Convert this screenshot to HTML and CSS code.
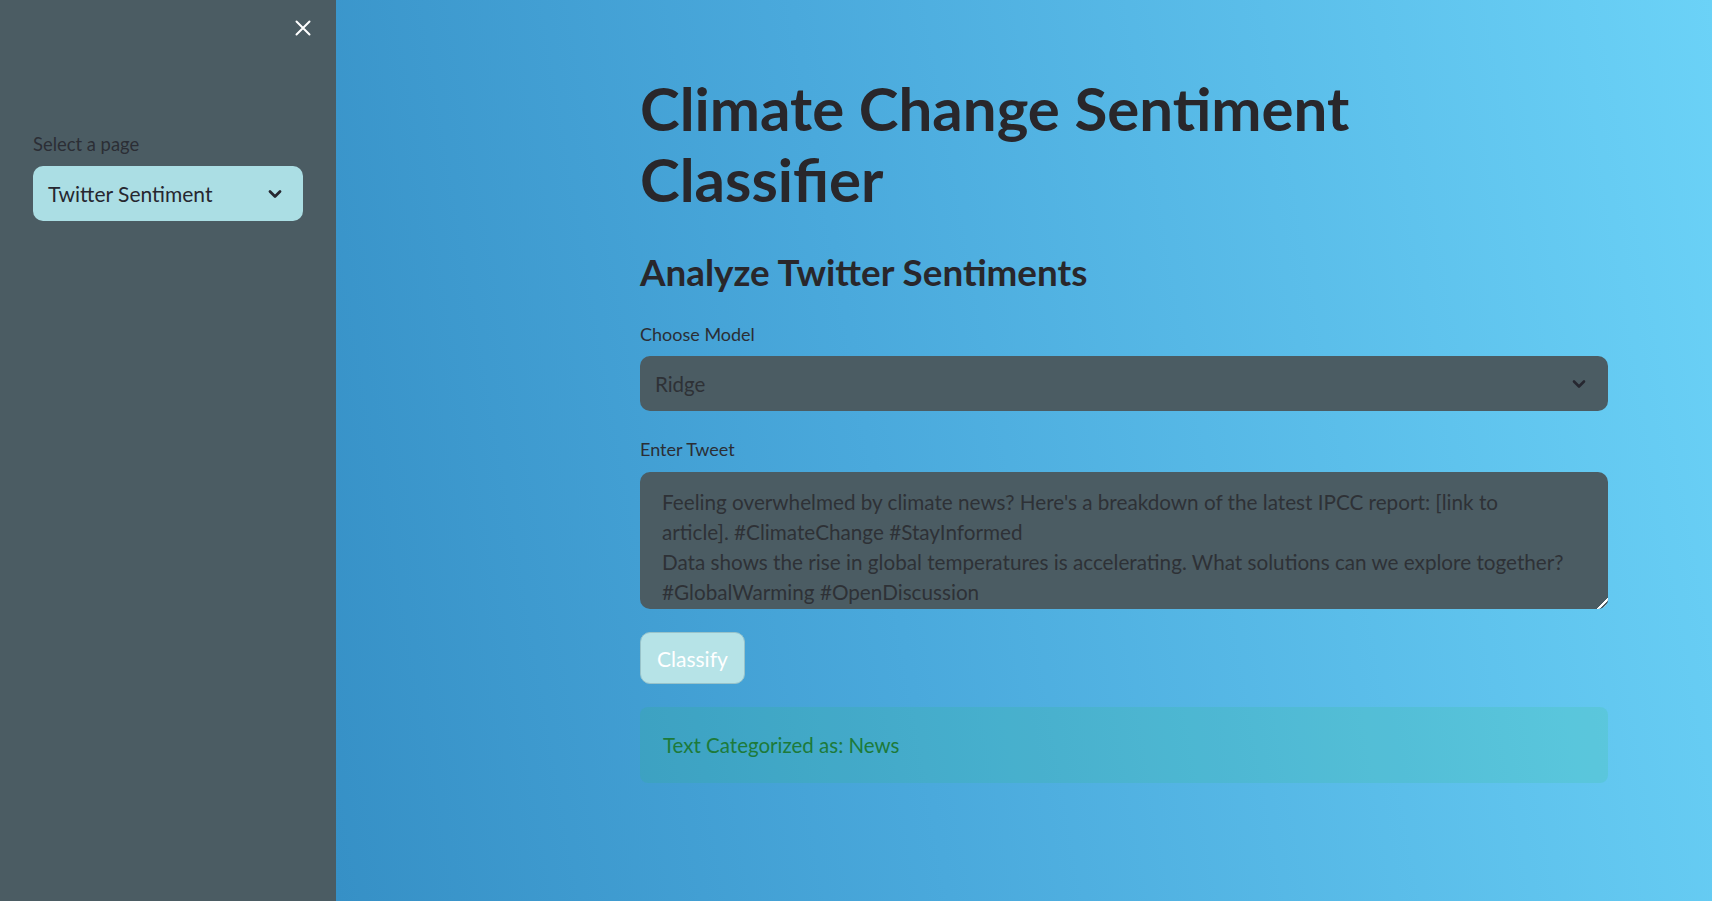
FILE: index.html
```html
<!DOCTYPE html>
<html lang="en">
<head>
<meta charset="utf-8">
<title>Climate Change Sentiment Classifier</title>
<link rel="stylesheet" href="styles.css">
</head>
<body>
<div class="app">
  <aside class="sidebar">
    <div class="sidebar-head">
      <button class="close" aria-label="Close sidebar">
        <svg width="16" height="16" viewBox="0 0 16 16"><path d="M1.5 1.5 L14.5 14.5 M14.5 1.5 L1.5 14.5" stroke="#ffffff" stroke-width="2" stroke-linecap="round" fill="none"/></svg>
      </button>
    </div>
    <div class="widget side-widget">
      <label class="label">Select a page</label>
      <div class="select select-light">
        <span class="select-value">Twitter Sentiment</span>
        <svg class="chev" width="14" height="10" viewBox="0 0 14 10"><path d="M2 2.5 L7 7.5 L12 2.5" stroke="#262730" stroke-width="2.8" fill="none" stroke-linecap="round" stroke-linejoin="round"/></svg>
      </div>
    </div>
  </aside>
  <main class="main">
    <div class="block">
      <h1 class="title">Climate Change Sentiment<br>Classifier</h1>
      <h2 class="subtitle">Analyze Twitter Sentiments</h2>
      <div class="widget">
        <label class="label">Choose Model</label>
        <div class="select select-dark">
          <span class="select-value">Ridge</span>
          <svg class="chev" width="14" height="10" viewBox="0 0 14 10"><path d="M2 2.5 L7 7.5 L12 2.5" stroke="#262730" stroke-width="2.6" fill="none" stroke-linecap="round" stroke-linejoin="round"/></svg>
        </div>
      </div>
      <div class="widget">
        <label class="label">Enter Tweet</label>
        <textarea class="textarea">Feeling overwhelmed by climate news? Here's a breakdown of the latest IPCC report: [link to
article]. #ClimateChange #StayInformed
Data shows the rise in global temperatures is accelerating. What solutions can we explore together?
#GlobalWarming #OpenDiscussion</textarea>
      </div>
      <button class="btn">Classify</button>
      <div class="alert">Text Categorized as: News</div>
    </div>
  </main>
</div>
</body>
</html>
```

FILE: styles.css
```css
* { box-sizing: border-box; }

html, body {
  margin: 0;
  height: 100%;
}

body {
  font-family: "Lato", "Source Sans Pro", sans-serif;
  color: #2a2a30;
  overflow: hidden;
}

.app {
  display: flex;
  height: 100vh;
}

.sidebar {
  width: 336px;
  flex: 0 0 336px;
  background: #4b5c63;
  padding: 0 33px;
}

.sidebar-head {
  display: flex;
  justify-content: flex-end;
  padding-top: 20px;
  height: 37px;
}

.close {
  background: none;
  border: none;
  padding: 0;
  margin-right: -8px;
  width: 16px;
  height: 16px;
  cursor: pointer;
  display: block;
}

.close svg { display: block; }

.side-widget {
  margin-top: 94px;
}

.label {
  display: block;
  font-size: 18px;
  line-height: 26px;
  color: #2b2e35;
  margin-bottom: 9px;
}

.sidebar .label { font-size: 18.4px; }

.select {
  height: 55px;
  border-radius: 10px;
  display: flex;
  align-items: center;
  justify-content: space-between;
  padding: 0 21px 0 15px;
  font-size: 20px;
  line-height: 24px;
}

.select-light {
  background: #abdee4;
  color: #262730;
  font-size: 21px;
}

.select-dark {
  background: #4b5c63;
  color: #2e3136;
  padding: 0 22px 0 15px;
  font-size: 20.5px;
}

.chev { display: block; }

.main {
  flex: 1;
  background: linear-gradient(80deg, #3690c6 0%, #4aa9dc 40%, #6bd2f7 100%);
  padding: 73px 104px 0 304px;
}

.block {
  width: 968px;
}

.title {
  margin: 0;
  font-size: 60px;
  line-height: 71px;
  font-weight: 700;
  color: #29272b;
}

.subtitle {
  margin: 31px 0 0;
  font-size: 36.8px;
  line-height: 52px;
  font-weight: 700;
  color: #29272b;
}

.main .widget {
  margin-top: 23px;
}

.main .widget + .widget {
  margin-top: 25px;
}

.textarea {
  display: block;
  width: 100%;
  height: 137px;
  border: none;
  border-radius: 10px;
  background: #4b5c63;
  color: #2e3136;
  font-family: inherit;
  font-size: 20.7px;
  line-height: 30px;
  padding: 15px 22px 2px;
  resize: vertical;
  overflow: hidden;
  white-space: pre-wrap;
  outline: none;
  margin-top: 10px;
}

.textarea::-webkit-resizer {
  background: linear-gradient(135deg, transparent 62%, #ffffff 62%, #ffffff 72%, #4b5c63 72%, #4b5c63 78%, #ffffff 78%);
  border-bottom-right-radius: 10px;
}

.main .label { margin-bottom: 9px; }

.btn {
  display: block;
  margin-top: 23px;
  height: 52px;
  padding: 0 16px;
  background: #b6e3e7;
  border: 1px solid #98c3ca;
  border-radius: 10px;
  color: #ffffff;
  font-family: inherit;
  font-size: 21px;
  cursor: pointer;
}

.alert {
  margin-top: 23px;
  height: 76px;
  border-radius: 8px;
  background: rgba(33, 195, 84, 0.12);
  color: #1d7a3a;
  font-size: 20.5px;
  line-height: 24px;
  padding: 0 23px;
  display: flex;
  align-items: center;
}
```
